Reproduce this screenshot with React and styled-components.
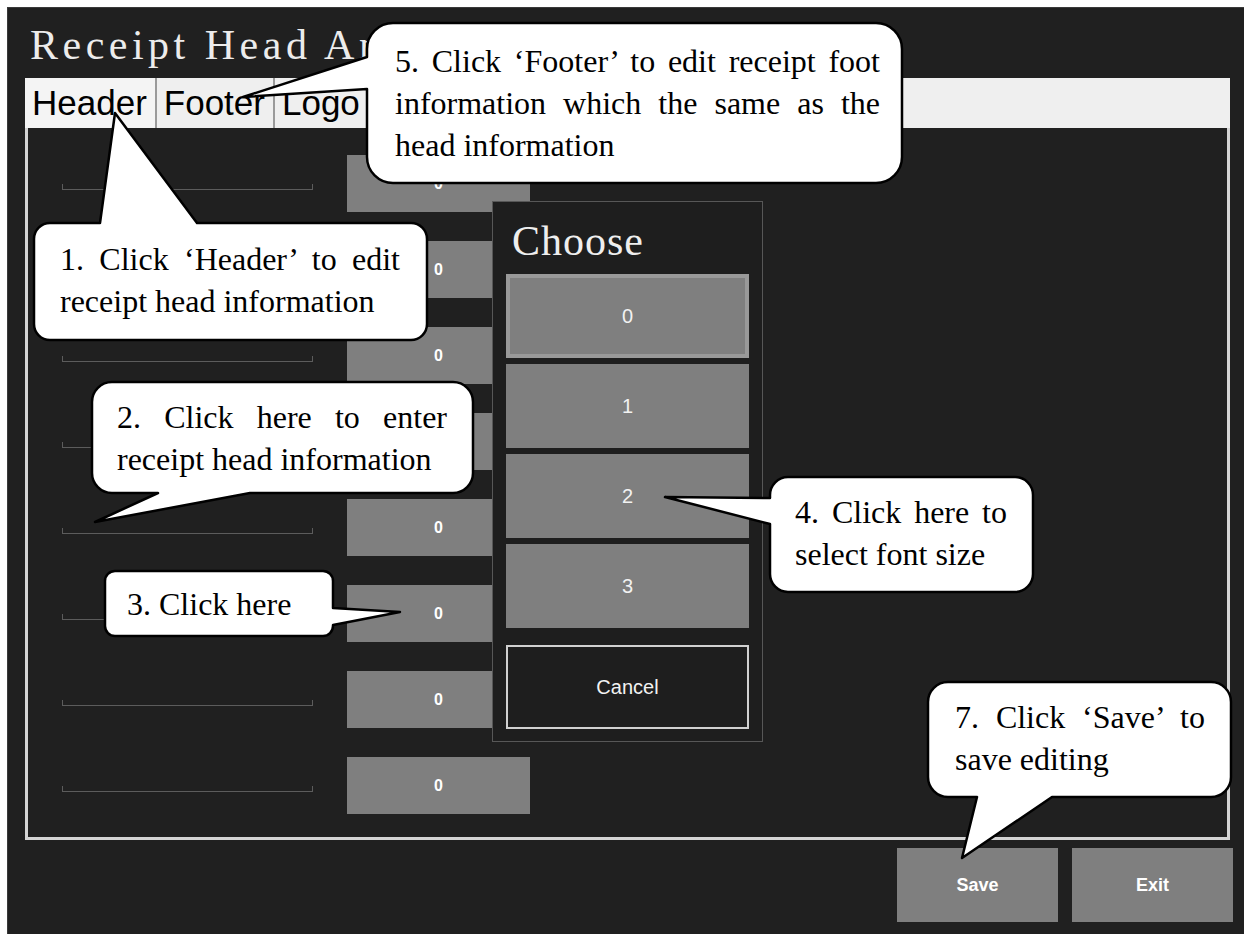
import React from "react";
import styled, { createGlobalStyle } from "styled-components";

const GlobalStyle = createGlobalStyle`
  html, body { margin: 0; padding: 0; background: #ffffff; }
  * { box-sizing: border-box; }
`;

const Page = styled.div`
  position: relative;
  width: 1244px;
  height: 934px;
  padding: 7px 0 0 7px;
  background: #ffffff;
  overflow: hidden;
`;

const Screen = styled.div`
  width: 1237px;
  height: 927px;
  background: #202020;
  border-left: 1px solid #3a3a3a;
  border-top: 1px solid #3a3a3a;
  display: flex;
  flex-direction: column;
`;

const TitleBar = styled.div`
  height: 70px;
  padding: 14px 0 0 22px;
`;

const Title = styled.h1`
  margin: 0;
  font-family: "Liberation Serif", "DejaVu Serif", serif;
  font-weight: 400;
  font-size: 42px;
  line-height: 46px;
  letter-spacing: 4.5px;
  color: #ececec;
  white-space: nowrap;
`;

const Main = styled.div`
  margin-left: 17px;
  width: 1205px;
  display: flex;
  flex-direction: column;
`;

const TabBar = styled.div`
  height: 50px;
  background: #efefef;
  display: flex;
`;

const Tab = styled.div`
  height: 50px;
  padding: 0 8px 0 7px;
  font-family: "Liberation Sans", Arial, sans-serif;
  font-size: 35px;
  line-height: 50px;
  color: #000;
  background: ${(p) => (p.$active ? "#f4f4f4" : "#efefef")};
  border-right: 2px solid #9a9a9a;
`;

const Content = styled.div`
  height: 712px;
  border: 3px solid #d4d4d4;
  border-top: none;
  padding: 27px 0 0 34px;
  display: flex;
  flex-direction: column;
  gap: 29px;
`;

const Row = styled.div`
  display: flex;
  align-items: flex-start;
  gap: 34px;
  height: 57px;
`;

const Field = styled.div`
  width: 251px;
  height: 6px;
  margin-top: 29px;
  border: 1px solid #5c5c5c;
  border-top: none;
`;

const ValueButton = styled.div`
  width: 183px;
  height: 57px;
  background: #7f7f7f;
  color: #ffffff;
  font-family: "Liberation Sans", Arial, sans-serif;
  font-weight: 700;
  font-size: 16px;
  display: flex;
  align-items: center;
  justify-content: center;
`;

const Footer = styled.div`
  display: flex;
  justify-content: flex-end;
  gap: 14px;
  padding: 8px 11px 0 0;
`;

const ActionButton = styled.div`
  width: 161px;
  height: 74px;
  background: #7f7f7f;
  color: #ffffff;
  font-family: "Liberation Sans", Arial, sans-serif;
  font-weight: 700;
  font-size: 18px;
  display: flex;
  align-items: center;
  justify-content: center;
`;

const Dialog = styled.div`
  position: absolute;
  left: 492px;
  top: 201px;
  width: 271px;
  height: 541px;
  background: #1e1e1e;
  border: 1px solid #575757;
  padding: 17px 13px 0 13px;
  display: flex;
  flex-direction: column;
`;

const DialogTitle = styled.div`
  font-family: "Liberation Serif", "DejaVu Serif", serif;
  font-size: 42px;
  line-height: 44px;
  letter-spacing: 1px;
  color: #eeeeee;
  margin: 0 0 11px 6px;
`;

const OptionList = styled.div`
  display: flex;
  flex-direction: column;
  gap: 6px;
`;

const Option = styled.div`
  height: 84px;
  background: #7f7f7f;
  border: ${(p) => (p.$selected ? "4px solid #999999" : "none")};
  color: #f2f2f2;
  font-family: "Liberation Sans", Arial, sans-serif;
  font-size: 20px;
  display: flex;
  align-items: center;
  justify-content: center;
`;

const CancelButton = styled.div`
  margin-top: 17px;
  height: 84px;
  background: #1e1e1e;
  border: 2px solid #d0d0d0;
  color: #f2f2f2;
  font-family: "Liberation Sans", Arial, sans-serif;
  font-size: 20px;
  display: flex;
  align-items: center;
  justify-content: center;
`;

const Bubble = styled.div`
  position: absolute;
  left: ${(p) => p.$x}px;
  top: ${(p) => p.$y}px;
  width: ${(p) => p.$w}px;
  height: ${(p) => p.$h}px;
  z-index: 5;
`;

const BubbleShape = styled.svg`
  position: absolute;
  left: 0;
  top: 0;
  overflow: visible;
`;

const BubbleText = styled.div`
  position: relative;
  margin: ${(p) => p.$pt}px 0 0 ${(p) => p.$pl}px;
  width: ${(p) => p.$tw}px;
  font-family: "Liberation Serif", "Times New Roman", serif;
  font-size: 32px;
  line-height: 42px;
  color: #000;
  text-align: justify;
  text-align-last: left;
  white-space: ${(p) => (p.$single ? "nowrap" : "normal")};
`;

function bubblePath(w, h, r, t) {
  const p = [`M ${r} 0`];
  if (t.side === "top") p.push(`L ${t.a} 0 L ${t.tx} ${t.ty} L ${t.b} 0`);
  p.push(`L ${w - r} 0 A ${r} ${r} 0 0 1 ${w} ${r}`);
  if (t.side === "right") p.push(`L ${w} ${t.a} L ${t.tx} ${t.ty} L ${w} ${t.b}`);
  p.push(`L ${w} ${h - r} A ${r} ${r} 0 0 1 ${w - r} ${h}`);
  if (t.side === "bottom") p.push(`L ${t.b} ${h} L ${t.tx} ${t.ty} L ${t.a} ${h}`);
  p.push(`L ${r} ${h} A ${r} ${r} 0 0 1 0 ${h - r}`);
  if (t.side === "left") p.push(`L 0 ${t.b} L ${t.tx} ${t.ty} L 0 ${t.a}`);
  p.push(`L 0 ${r} A ${r} ${r} 0 0 1 ${r} 0 Z`);
  return p.join(" ");
}

function Callout({ x, y, w, h, r, tail, pt, pl, tw, single, children }) {
  return (
    <Bubble $x={x} $y={y} $w={w} $h={h}>
      <BubbleShape width={w} height={h}>
        <path
          d={bubblePath(w, h, r, tail)}
          fill="#ffffff"
          stroke="#000000"
          strokeWidth="2.5"
          strokeLinejoin="round"
        />
      </BubbleShape>
      <BubbleText $pt={pt} $pl={pl} $tw={tw} $single={single}>
        {children}
      </BubbleText>
    </Bubble>
  );
}

const callouts = [
  {
    key: "c1", x: 34, y: 223, w: 393, h: 117, r: 16,
    tail: { side: "top", a: 66, b: 163, tx: 81, ty: -110 },
    pt: 15, pl: 26, tw: 340,
    text: "1. Click \u2018Header\u2019 to edit receipt head information",
  },
  {
    key: "c5", x: 367, y: 23, w: 535, h: 160, r: 26,
    tail: { side: "left", a: 34, b: 66, tx: -124, ty: 74 },
    pt: 17, pl: 28, tw: 485,
    text: "5. Click \u2018Footer\u2019 to edit receipt foot information which the same as the head information",
  },
  {
    key: "c2", x: 92, y: 382, w: 381, h: 111, r: 20,
    tail: { side: "bottom", a: 66, b: 158, tx: 3, ty: 140 },
    pt: 14, pl: 25, tw: 330,
    text: "2. Click here to enter receipt head information",
  },
  {
    key: "c3", x: 105, y: 571, w: 228, h: 65, r: 10,
    tail: { side: "right", a: 37, b: 54, tx: 295, ty: 41 },
    pt: 12, pl: 22, tw: 190, single: true,
    text: "3. Click here",
  },
  {
    key: "c4", x: 770, y: 477, w: 263, h: 115, r: 18,
    tail: { side: "left", a: 21, b: 47, tx: -105, ty: 20 },
    pt: 14, pl: 25, tw: 212,
    text: "4. Click here to select font size",
  },
  {
    key: "c7", x: 928, y: 682, w: 303, h: 115, r: 20,
    tail: { side: "bottom", a: 49, b: 124, tx: 34, ty: 176 },
    pt: 14, pl: 27, tw: 250,
    text: "7. Click \u2018Save\u2019 to save editing",
  },
];

const rows = [0, 1, 2, 3, 4, 5, 6, 7];
const options = ["0", "1", "2", "3"];

export default function App() {
  return (
    <>
      <GlobalStyle />
      <Page>
        <Screen>
          <TitleBar>
            <Title>Receipt Head And Foot</Title>
          </TitleBar>
          <Main>
            <TabBar>
              <Tab $active>Header</Tab>
              <Tab>Footer</Tab>
              <Tab>Logo</Tab>
            </TabBar>
            <Content>
              {rows.map((r) => (
                <Row key={r}>
                  <Field />
                  <ValueButton>0</ValueButton>
                </Row>
              ))}
            </Content>
          </Main>
          <Footer>
            <ActionButton>Save</ActionButton>
            <ActionButton>Exit</ActionButton>
          </Footer>
        </Screen>

        <Dialog>
          <DialogTitle>Choose</DialogTitle>
          <OptionList>
            {options.map((o, i) => (
              <Option key={o} $selected={i === 0}>{o}</Option>
            ))}
          </OptionList>
          <CancelButton>Cancel</CancelButton>
        </Dialog>

        {callouts.map(({ key, text, ...rest }) => (
          <Callout key={key} {...rest}>{text}</Callout>
        ))}
      </Page>
    </>
  );
}
